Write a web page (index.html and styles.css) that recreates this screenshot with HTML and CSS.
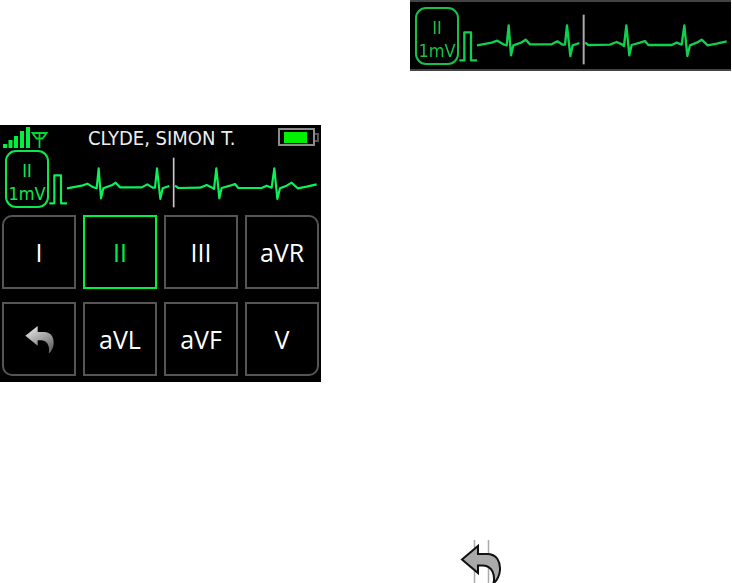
FILE: index.html
```html
<!DOCTYPE html>
<html lang="en">
<head>
<meta charset="utf-8">
<title>ECG lead selection</title>
<link rel="stylesheet" href="styles.css">
</head>
<body>
<main class="page">
  <section class="left-col">
    <div class="device">
      <header class="status">
        <svg class="signal" viewBox="0 0 48 23" width="48" height="23" aria-hidden="true">
          <rect x="3" y="18" width="4" height="4"/>
          <rect x="8.500" y="14" width="4" height="8"/>
          <rect x="14" y="10" width="4" height="12"/>
          <rect x="20" y="5" width="4" height="17"/>
          <rect x="26" y="1" width="4" height="21"/>
          <path class="antenna" d="M32.500 7H46.500L42.500 12.500H36.500ZM39.500 7V22"/>
        </svg>
        <span class="patient">CLYDE, SIMON T.</span>
        <div class="battery">
          <span class="battery-body"><span class="battery-fill"></span></span>
          <span class="battery-nub"></span>
        </div>
      </header>
      <div class="ecg-row">
        <div class="lead-box"><span>II</span><span>1mV</span></div>
        <svg class="ecg" viewBox="147 90 816 186" width="272" height="62" aria-hidden="true">
          <path class="trace" d="M148 250H163V166H183V250H201"/>
          <path class="trace" d="M201 205L245 197L262 191L280 202L290 205L296 145L303 235L310 205L335 196L347 188L360 202L425 202L442 193L458 203L465 203L471 145L481 237L488 205L508 198"/>
          <path class="trace" d="M525 197L535 204L600 203L620 195L637 203L642 207L649 145L658 235L665 204L690 197L705 192L715 204L785 204L800 197L815 203L823 145L832 237L840 205L860 197L875 188L893 205L920 200L950 193"/>
          <path class="cursor" d="M521 113V262"/>
        </svg>
      </div>
      <div class="leads">
        <button class="lead corner-tl">I</button>
        <button class="lead active">II</button>
        <button class="lead">III</button>
        <button class="lead corner-tr">aVR</button>
        <button class="lead corner-bl" aria-label="Back">
          <svg viewBox="30 14 125 118" width="31" height="29" aria-hidden="true">
            <defs>
              <linearGradient id="fade" x1="0" y1="0" x2="0.6" y2="1">
                <stop offset="0" stop-color="#f2f2f2"/>
                <stop offset="1" stop-color="#6a6a6a"/>
              </linearGradient>
            </defs>
            <path fill="url(#fade)" d="M35 58L85 18V42H110C140 42 152 65 150 90C149 105 140 125 130 129C135 110 130 78 100 76H85V98Z"/>
          </svg>
        </button>
        <button class="lead">aVL</button>
        <button class="lead">aVF</button>
        <button class="lead corner-br">V</button>
      </div>
    </div>
  </section>
  <section class="right-col">
    <div class="strip">
      <div class="lead-box soft"><span>II</span><span>1mV</span></div>
      <svg class="ecg soft" viewBox="147 90 816 186" width="272" height="62" aria-hidden="true">
        <path class="trace" d="M148 250H163V166H183V250H201"/>
        <path class="trace" d="M201 205L245 197L262 191L280 202L290 205L296 145L303 235L310 205L335 196L347 188L360 202L425 202L442 193L458 203L465 203L471 145L481 237L488 205L508 198"/>
        <path class="trace" d="M525 197L535 204L600 203L620 195L637 203L642 207L649 145L658 235L665 204L690 197L705 192L715 204L785 204L800 197L815 203L823 145L832 237L840 205L860 197L875 188L893 205L920 200L950 193"/>
        <path class="cursor" d="M521 113V262"/>
      </svg>
    </div>
    <svg class="back-large" viewBox="0 0 60 43" width="60" height="43" aria-hidden="true">
      <path class="guide" d="M24.500 0V43M38.500 0V43"/>
      <path class="arrow" d="M12 19.500L28 6V14H37C47 14 50.500 22 50 30C49.700 35 47 41 43.500 43C45 37 43.500 26 33 25.500H28V33Z"/>
    </svg>
  </section>
</main>
</body>
</html>
```

FILE: styles.css
```css
html, body {
  margin: 0;
  height: 583px;
  overflow: hidden;
  background: #fff;
}

.page {
  display: grid;
  grid-template-columns: 410px 322px;
  width: 732px;
  height: 583px;
}

.left-col {
  padding-top: 125px;
}

.device {
  width: 321px;
  height: 257px;
  background: #000;
  box-sizing: border-box;
  padding-top: 1px;
}

.status {
  display: flex;
  align-items: flex-start;
  height: 24px;
}

.signal {
  display: block;
  flex: none;
}

.signal rect {
  fill: #00f040;
}

.antenna {
  fill: none;
  stroke: #00d838;
  stroke-width: 1.800;
}

.patient {
  flex: none;
  width: 150px;
  margin: 2px 0 0 40px;
  font: 20px/20px "DejaVu Sans Condensed", "DejaVu Sans", sans-serif;
  font-stretch: condensed;
  color: #eee;
  white-space: nowrap;
}

.battery {
  display: flex;
  flex: none;
  align-items: center;
  margin: 2px 0 0 40px;
}

.battery-body {
  display: flex;
  align-items: center;
  box-sizing: border-box;
  width: 37px;
  height: 18px;
  padding-left: 4px;
  border: 2px solid #8c8c8c;
}

.battery-fill {
  width: 23px;
  height: 11px;
  background: #00f000;
}

.battery-nub {
  box-sizing: border-box;
  width: 4px;
  height: 9px;
  border: 2px solid #555;
  border-left: 0;
}

.ecg-row {
  display: flex;
  padding-left: 5px;
}

.lead-box {
  display: flex;
  flex: none;
  flex-direction: column;
  align-items: center;
  box-sizing: border-box;
  width: 44px;
  height: 58px;
  padding-top: 7px;
  border: 2px solid #0ce84c;
  border-radius: 11px;
  font: 18px/23px "DejaVu Sans Condensed", "DejaVu Sans", sans-serif;
  font-stretch: condensed;
  color: #0ce84c;
}

.ecg {
  display: block;
  flex: none;
}

.trace {
  fill: none;
  stroke: #0cf05a;
  stroke-width: 6.500;
  stroke-linejoin: round;
}

.cursor {
  fill: none;
  stroke: #c8c8c8;
  stroke-width: 5;
}

.leads {
  display: grid;
  grid-template-columns: repeat(4, 74px);
  grid-auto-rows: 74px;
  gap: 13px 7px;
  padding: 3px 0 0 2px;
}

.lead {
  display: flex;
  align-items: center;
  justify-content: center;
  box-sizing: border-box;
  margin: 0;
  padding: 0;
  background: #000;
  border: 2px solid #555;
  color: #fff;
  font: 25px/1 "Open Sans", sans-serif;
}

.lead.active {
  border-color: #00f040;
  color: #00f040;
}

.corner-tl { border-top-left-radius: 10px; }
.corner-tr { border-top-right-radius: 10px; }
.corner-bl { border-bottom-left-radius: 10px; }
.corner-br { border-bottom-right-radius: 10px; }

.strip {
  display: flex;
  box-sizing: border-box;
  width: 321px;
  height: 71px;
  padding: 5px 0 0 5px;
  background: #000;
  border-top: 2px solid #444;
  border-bottom: 2px solid #444;
}

.strip .lead-box {
  border-color: #18c048;
  color: #18c048;
  filter: blur(0.5px);
}

.strip .ecg {
  filter: blur(0.7px);
}

.strip .trace {
  stroke: #10d050;
  stroke-width: 7;
}

.strip .cursor {
  stroke: #aaa;
  stroke-width: 6;
}

.back-large {
  display: block;
  margin: 469px 0 0 40px;
}

.guide {
  fill: none;
  stroke: #aaa;
  stroke-width: 1.500;
}

.arrow {
  fill: #aaa;
  stroke: #111;
  stroke-width: 2;
}
```
